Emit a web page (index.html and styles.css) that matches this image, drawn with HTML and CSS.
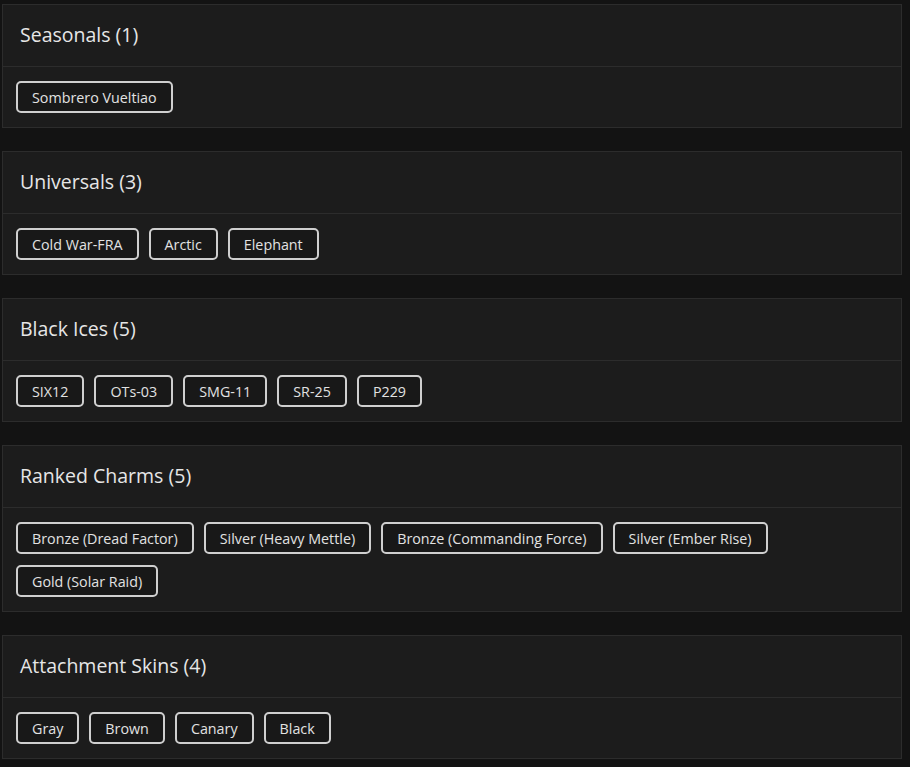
FILE: index.html
```html
<!DOCTYPE html>
<html>
<head>
<meta charset="utf-8">
<link rel="stylesheet" href="styles.css">
</head>
<body>
<div class="list">
  <section class="card">
    <div class="card-head">Seasonals (1)</div>
    <div class="card-body">
      <span class="tag">Sombrero Vueltiao</span>
    </div>
  </section>
  <section class="card">
    <div class="card-head">Universals (3)</div>
    <div class="card-body">
      <span class="tag">Cold War-FRA</span>
      <span class="tag">Arctic</span>
      <span class="tag">Elephant</span>
    </div>
  </section>
  <section class="card">
    <div class="card-head">Black Ices (5)</div>
    <div class="card-body">
      <span class="tag">SIX12</span>
      <span class="tag">OTs-03</span>
      <span class="tag">SMG-11</span>
      <span class="tag">SR-25</span>
      <span class="tag">P229</span>
    </div>
  </section>
  <section class="card">
    <div class="card-head">Ranked Charms (5)</div>
    <div class="card-body">
      <span class="tag">Bronze (Dread Factor)</span>
      <span class="tag">Silver (Heavy Mettle)</span>
      <span class="tag">Bronze (Commanding Force)</span>
      <span class="tag">Silver (Ember Rise)</span>
      <span class="tag">Gold (Solar Raid)</span>
    </div>
  </section>
  <section class="card">
    <div class="card-head">Attachment Skins (4)</div>
    <div class="card-body">
      <span class="tag">Gray</span>
      <span class="tag">Brown</span>
      <span class="tag">Canary</span>
      <span class="tag">Black</span>
    </div>
  </section>
</div>
</body>
</html>
```
FILE: styles.css
```css
html, body {
  margin: 0;
  background: #131313;
}
body {
  font-family: "Open Sans", "Noto Sans", sans-serif;
  color: #e4e4e4;
}
.list {
  display: flex;
  flex-direction: column;
  gap: 23px;
  padding: 4px 8px 0 2px;
}
.card {
  background: #1c1c1c;
  border: 1px solid #2c2c2c;
}
.card-head {
  padding: 16px 17px 17px;
  font-size: 19.5px;
  line-height: 28px;
  font-weight: 500;
  border-bottom: 1px solid #2c2c2c;
  color: #e6e6e6;
}
.card-body {
  display: flex;
  flex-wrap: wrap;
  gap: 11px 10px;
  padding: 14px 13px 14px;
}
.tag {
  display: inline-flex;
  align-items: center;
  height: 32px;
  box-sizing: border-box;
  padding: 0 14px;
  border: 2px solid #cfcfcf;
  border-radius: 5px;
  background: #181818;
  font-size: 14.3px;
  color: #e2e2e2;
}
```
